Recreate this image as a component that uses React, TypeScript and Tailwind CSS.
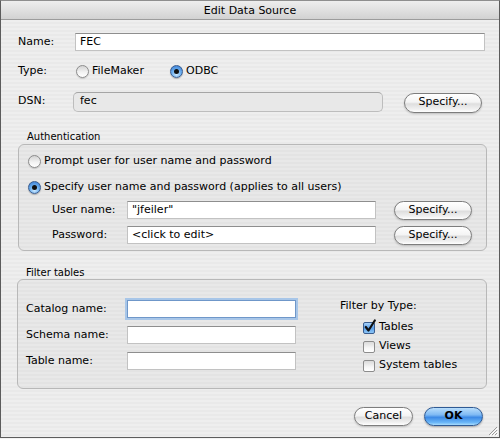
import React from "react";

function Radio({ checked }: { checked?: boolean }) {
  return checked ? (
    <span className="w-[13px] h-[13px] rounded-full border border-[#3a5d8f] bg-[radial-gradient(circle_at_50%_75%,#d2ecff_0%,#6eb0ef_45%,#2f74cf_100%)] flex items-center justify-center shrink-0 shadow-[0_1px_1px_rgba(0,0,0,0.25)]">
      <span className="w-[5px] h-[5px] rounded-full bg-[#101010]" />
    </span>
  ) : (
    <span className="w-[13px] h-[13px] rounded-full border border-[#8c8c8c] bg-[linear-gradient(180deg,#d4d4d4_0%,#f4f4f4_60%,#ffffff_100%)] shrink-0 shadow-[0_1px_1px_rgba(0,0,0,0.15)]" />
  );
}

function Checkbox({ checked }: { checked?: boolean }) {
  return (
    <span className="relative w-[12px] h-[12px] shrink-0">
      <span
        className={
          checked
            ? "absolute inset-0 rounded-[2px] border border-[#3a5d8f] bg-[linear-gradient(180deg,#a9d3fa_0%,#5a9fe9_50%,#8cc6f7_100%)]"
            : "absolute inset-0 rounded-[2px] border border-[#8c8c8c] bg-[linear-gradient(180deg,#dadada_0%,#f6f6f6_60%,#ffffff_100%)]"
        }
      />
      {checked && (
        <svg className="absolute left-[1px] top-[-3px]" width="12" height="14" viewBox="0 0 12 14">
          <path d="M1.8 8 L4.5 11.5 L10.8 1.5" fill="none" stroke="#111" strokeWidth="2.2" strokeLinecap="round" strokeLinejoin="round" />
        </svg>
      )}
    </span>
  );
}

function AquaButton({ label, w, h = 20, blue }: { label: string; w: number; h?: number; blue?: boolean }) {
  return (
    <div
      style={{ width: w, height: h }}
      className={
        blue
          ? "rounded-full border border-[#2f5a94] bg-[linear-gradient(180deg,#b9defc_0%,#7fbaf4_40%,#3d8ae6_55%,#6ab6f7_85%,#a8dcfd_100%)] flex items-center justify-center text-[11px] font-bold text-black shrink-0 shadow-[0_1px_2px_rgba(0,0,0,0.3)]"
          : "rounded-full border border-[#7d7d7d] bg-[linear-gradient(180deg,#ffffff_0%,#f4f4f4_45%,#dedede_55%,#f1f1f1_85%,#ffffff_100%)] flex items-center justify-center text-[11px] text-black shrink-0 shadow-[0_1px_2px_rgba(0,0,0,0.2)]"
      }
    >
      {label}
    </div>
  );
}

function TextField({ w, value, focus }: { w: number; value?: string; focus?: boolean }) {
  return (
    <div
      style={{ width: w }}
      className={
        focus
          ? "h-[18px] bg-white border border-[#6f97c9] shadow-[0_0_0_2px_#a8c6e8] flex items-center px-[4px] text-[11px] shrink-0"
          : "h-[18px] bg-white border border-[#c2c2c2] border-t-[#8e8e8e] flex items-center px-[4px] text-[11px] shrink-0"
      }
    >
      {value}
    </div>
  );
}

export default function App() {
  return (
    <div className="w-[500px] h-[439px] bg-[#f2f2f2] font-['DejaVu_Sans',sans-serif] text-black">
      <div className="relative w-[500px] h-[438px] border border-[#5c5c5c] border-t-[#8e8e8e] flex flex-col overflow-hidden">
        <div className="h-[19px] shrink-0 border-b border-[#9c9c9c] bg-[linear-gradient(180deg,#eeeeee_0%,#e0e0e0_50%,#d2d2d2_100%)] flex items-center justify-center text-[11px] leading-none">
          Edit Data Source
        </div>
        <div className="flex-1 flex flex-col bg-[repeating-linear-gradient(180deg,#eeeeee_0px,#eeeeee_2px,#e9e9e9_2px,#e9e9e9_4px)] text-[11px]">
          {/* Name */}
          <div className="mt-[13px] h-[18px] flex items-center pl-[17px]">
            <span className="w-[57px]">Name:</span>
            <TextField w={410} value="FEC" />
          </div>
          {/* Type */}
          <div className="mt-[11px] h-[18px] flex items-center pl-[17px]">
            <span className="w-[58px]">Type:</span>
            <div className="w-[94px] flex items-center gap-[3px]">
              <Radio />
              <span>FileMaker</span>
            </div>
            <div className="flex items-center gap-[3px]">
              <Radio checked />
              <span>ODBC</span>
            </div>
          </div>
          {/* DSN */}
          <div className="mt-[11px] h-[21px] flex items-center pl-[17px]">
            <span className="w-[55px]">DSN:</span>
            <div className="w-[310px] h-[20px] rounded-[5px] border border-[#bdbdbd] border-t-[#a5a5a5] bg-[#e8e8e8] flex items-center px-[6px]">
              fec
            </div>
            <div className="ml-[21px] mt-[2px]">
              <AquaButton label="Specify..." w={78} h={20} />
            </div>
          </div>
          {/* Authentication */}
          <div className="mt-[18px] h-[13px] flex items-center pl-[26px] text-[10px] leading-none">Authentication</div>
          <div className="mt-[1px] ml-[17px] w-[469px] h-[107px] rounded-[6px] border border-[#b8b8b8] bg-[rgba(0,0,0,0.025)] flex flex-col">
            <div className="mt-[9px] h-[14px] flex items-center pl-[9px] gap-[3px]">
              <Radio />
              <span>Prompt user for user name and password</span>
            </div>
            <div className="mt-[12px] h-[14px] flex items-center pl-[9px] gap-[3px]">
              <Radio checked />
              <span>Specify user name and password (applies to all users)</span>
            </div>
            <div className="mt-[7px] h-[18px] flex items-center pl-[33px]">
              <span className="w-[75px]">User name:</span>
              <TextField w={249} value={'"jfeiler"'} />
              <div className="ml-[18px] mt-[1px]">
                <AquaButton label="Specify..." w={78} h={19} />
              </div>
            </div>
            <div className="mt-[7px] h-[18px] flex items-center pl-[33px]">
              <span className="w-[75px]">Password:</span>
              <TextField w={249} value="<click to edit>" />
              <div className="ml-[18px] mt-[1px]">
                <AquaButton label="Specify..." w={78} h={19} />
              </div>
            </div>
          </div>
          {/* Filter tables */}
          <div className="mt-[16px] h-[12px] flex items-center pl-[25px] text-[10px] leading-none">Filter tables</div>
          <div className="ml-[16px] w-[470px] h-[110px] rounded-[6px] border border-[#b8b8b8] bg-[rgba(0,0,0,0.025)] flex">
            <div className="flex flex-col pl-[8px] pt-[20px] gap-[8px]">
              {[
                ["Catalog name:", true],
                ["Schema name:", false],
                ["Table name:", false],
              ].map(([l, f]) => (
                <div key={l as string} className="h-[18px] flex items-center">
                  <span className="w-[101px]">{l as string}</span>
                  <TextField w={169} focus={f as boolean} />
                </div>
              ))}
            </div>
            <div className="ml-[44px] pt-[19px] flex flex-col">
              <div className="h-[14px] flex items-center">Filter by Type:</div>
              <div className="mt-[5px] flex flex-col pl-[23px]">
                {[
                  ["Tables", true],
                  ["Views", false],
                  ["System tables", false],
                ].map(([l, c]) => (
                  <div key={l as string} className="h-[19px] flex items-center gap-[4px]">
                    <Checkbox checked={c as boolean} />
                    <span>{l as string}</span>
                  </div>
                ))}
              </div>
            </div>
          </div>
          {/* Buttons */}
          <div className="mt-[18px] flex justify-end pr-[16px] gap-[11px]">
            <AquaButton label="Cancel" w={59} h={19} />
            <AquaButton label="OK" w={59} h={19} blue />
          </div>
        </div>
        <svg className="absolute right-[1px] bottom-[1px]" width="11" height="11" viewBox="0 0 11 11">
          <path d="M10 2 L2 10 M10 5 L5 10 M10 8 L8 10" stroke="#9a9a9a" strokeWidth="1" />
          <path d="M11 3 L3 11 M11 6 L6 11 M11 9 L9 11" stroke="#ffffff" strokeWidth="1" />
        </svg>
      </div>
    </div>
  );
}
